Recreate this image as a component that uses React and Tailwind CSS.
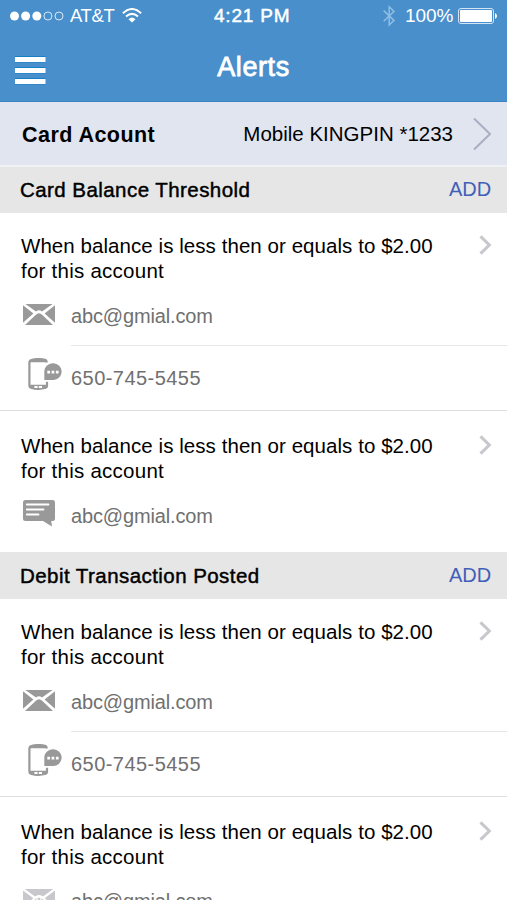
const MailIcon = ({ className }) => (
    <svg width="32" height="21" viewBox="0 0 32 21" className={className} fill="currentColor">
        <path d="M2.4 0H29.6L19 7.4Q16 4.9 13 7.4Z" />
        <path d="M0 1.2L10.4 9.4L0 18.8ZM32 1.2L21.6 9.4L32 18.8Z" />
        <path d="M2 21L12.6 11.1L14.4 9.7Q16 8.6 17.6 9.7L19.4 11.1L30 21Z" />
    </svg>
)

const OpenMailIcon = ({ className }) => (
    <svg width="32" height="21" viewBox="0 0 32 21" className={className}>
        <path d="M0 0H32V21H0Z" fill="currentColor" />
        <path d="M0 0L12 9M32 0L20 9M0 20.5L12 9Q16 5.4 20 9L32 20.5" fill="none" stroke="#fff" strokeWidth="2.2" />
        <circle cx="16" cy="10" r="2" fill="none" stroke="#fff" strokeWidth="1.2" />
    </svg>
)

const PhoneIcon = ({ className }) => (
    <svg width="34" height="32" viewBox="0 0 34 32" className={className} fill="none">
        <path d="M18.6 4.6V3.6Q18.6 2.3 17 1.8Q10.5 .3 4 1.8Q1.4 2.2 1.4 4.6V27.4Q1.4 29.4 3.6 30Q10 31.6 17 30Q19 29.4 19 27.4V23.8" stroke="currentColor" strokeWidth="2.2" />
        <path d="M2 2.6Q10.5-.8 18.8 2.6V4.2H2ZM1.2 26.8H19.4V29.2Q10.3 33.6 1.2 29.2Z" fill="currentColor" />
        <path d="M6.4 27.9H9.6V30H6.4ZM10.8 27.9H14V30H10.8Z" fill="#fff" />
        <path d="M25 5.2C29.8 5.2 33.6 8.9 33.6 13.6S29.8 22 25 22H16.3V13.6C16.3 8.9 20.2 5.2 25 5.2Z" fill="currentColor" />
        <g fill="#fff">
            <path d="M19.3 12.8H22V15.4H19.3ZM23.6 12.8H26.3V15.4H23.6ZM27.9 12.8H30.6V15.4H27.9Z" />
        </g>
    </svg>
)

const MessageIcon = ({ className }) => (
    <svg width="32" height="27" viewBox="0 0 32 27" className={className}>
        <path d="M2.5 0H29.5Q32 0 32 2.5V18.5Q32 21 29.5 21H28.2L29 26.5L20 21H2.5Q0 21 0 18.5V2.5Q0 0 2.5 0Z" fill="currentColor" />
        <path d="M3.8 4.5H25.5M3.8 9.5H20.5M3.8 14.5H15.5" stroke="#fff" strokeWidth="1.8" strokeLinecap="round" />
    </svg>
)

const StatusBar = () => (
    <div className="flex h-8 items-center text-white">
        <svg width="54" height="10" viewBox="0 0 54 10" className="ml-[10px]" fill="#fff">
            <circle cx="4.5" cy="5" r="4.5" />
            <circle cx="15.6" cy="5" r="4.5" />
            <circle cx="26.8" cy="5" r="4.5" />
            <circle cx="37.9" cy="5" r="4" fill="none" stroke="#fff" strokeWidth=".8" />
            <circle cx="49" cy="5" r="4" fill="none" stroke="#fff" strokeWidth=".8" />
        </svg>
        <span className="ml-[6px] w-[52px] whitespace-nowrap text-[18.5px] leading-8 tracking-[-0.4px]">AT&amp;T</span>
        <svg width="20" height="15" viewBox="0 0 20 15" className="mt-[-1px]" fill="none" stroke="#fff" strokeWidth="2">
            <path d="M.9 5.2Q10-3.2 19.1 5.2M4 8.6Q10 3.2 16 8.6" />
            <path d="M6.5 11.2Q10 8 13.5 11.2L10 14.6Z" fill="#fff" stroke="none" />
        </svg>
        <span className="ml-[72px] w-[169px] whitespace-nowrap text-[19px] leading-8 tracking-[0.8px] [-webkit-text-stroke:0.5px]">4:21 PM</span>
        <svg width="12" height="22" viewBox="0 0 12 22" fill="none" stroke="#8fbde3" strokeWidth="1.5">
            <path d="M.7 5.6L11 15.4L6.2 20V1.8L11 6.4L.7 16.2" />
        </svg>
        <span className="ml-[10px] w-[53px] whitespace-nowrap text-[19px] leading-8 tracking-[-0.1px]">100%</span>
        <svg width="40" height="16" viewBox="0 0 40 16">
            <rect x=".5" y=".5" width="35" height="15" rx="2.5" fill="none" stroke="#d3e4f4" />
            <rect x="2" y="2" width="32" height="12" rx="1" fill="#fff" />
            <path d="M37 5Q39 6 39 8T37 11Z" fill="#fff" />
        </svg>
    </div>
)

const Header = () => (
    <header className="h-[102px] border-b border-[#3a84c4] bg-[#488fcc]">
        <StatusBar />
        <div className="grid grid-cols-[1fr_auto_1fr] items-center">
            <svg width="31" height="29" viewBox="0 0 31 29" className="ml-[15px] mt-6">
                <path d="M0 .5H30.5M0 11.5H30.5M0 22.5H30.5M0 6H30.5M0 17H30.5M0 28H30.5" stroke="#1580c8" />
                <path d="M0 3.5H30.5M0 14.5H30.5M0 25.5H30.5" stroke="#fff" strokeWidth="5" />
            </svg>
            <h1 className="mt-4 text-[27px] leading-[34px] tracking-[0.6px] text-white [-webkit-text-stroke:0.8px]">Alerts</h1>
        </div>
    </header>
)

const SectionHeader = ({ title, className = 'h-[46px]' }) => (
    <div className={`flex items-center justify-between bg-[#e6e6e6] pl-5 pr-4 ${className}`}>
        <h2 className="text-[20.5px] tracking-[0.44px] [-webkit-text-stroke:0.45px]">{title}</h2>
        <button className="mt-[-3px] text-[20px] tracking-[-0.1px] text-[#3f60b8]">ADD</button>
    </div>
)

const Chevron = () => (
    <svg width="13" height="20" viewBox="0 0 13 20" className="mt-[2px]" fill="none" stroke="#c7c7cc" strokeWidth="3">
        <path d="M1.5 1.4L10.3 10L1.5 18.6" />
    </svg>
)

const AlertText = () => (
    <div className="flex items-start justify-between pl-[21px] pr-[15px]">
        <p className="whitespace-nowrap text-[20.5px] leading-[25px] tracking-[0.06px]">
            When balance is less then or equals to $2.00
            <br />
            <span className="tracking-[0.25px]">for this account</span>
        </p>
        <Chevron />
    </div>
)

const Contact = ({ icon, children, className = 'leading-[64px] tracking-[-0.15px]' }) => (
    <div className="flex">
        <div className="w-[71px] shrink-0 text-[#999]">{icon}</div>
        <div className={`flex-1 text-[20px] text-[#707070] ${className}`}>{children}</div>
    </div>
)

const EmailAndPhone = () => (
    <>
        <Contact icon={<MailIcon className="ml-[23px] mt-5" />} className="h-[62px] border-b border-[#e6e6e6] leading-[64px] tracking-[-0.15px]">abc@gmial.com</Contact>
        <Contact icon={<PhoneIcon className="ml-[28px] mt-3" />} className="h-[64px] leading-[64px] tracking-[0.45px]">650-745-5455</Contact>
    </>
)

const App = () => {
    return (
        <div className="h-[900px] w-[507px] overflow-hidden bg-white font-['Liberation_Sans',Arial,sans-serif] text-black">
            <Header />

            <div className="flex h-[65px] items-center border-b-2 border-[#f0f1f4] bg-[#e1e5f0] pl-[22px] pr-[15px]">
                <span className="mt-[3px] text-[21.5px] font-bold tracking-[0.45px]">Card Acount</span>
                <span className="ml-auto mt-[2px] text-[20.5px]">Mobile KINGPIN *1233</span>
                <svg width="19" height="34" viewBox="0 0 19 34" className="ml-5" fill="none" stroke="#a9aec2" strokeWidth="2">
                    <path d="M1 1.5L17 17L1 32.5" />
                </svg>
            </div>

            <SectionHeader title="Card Balance Threshold" />
            <div className="border-b border-[#dedede] pt-5">
                <AlertText />
                <div className="pt-px">
                    <EmailAndPhone />
                </div>
            </div>
            <div className="h-[141px] pt-[22px]">
                <AlertText />
                <Contact icon={<MessageIcon className="ml-[23px] mt-[17px]" />} className="leading-[66px] tracking-[-0.15px]">abc@gmial.com</Contact>
            </div>

            <SectionHeader title="Debit Transaction Posted" className="h-[47px] pt-px" />
            <div className="border-b border-[#dedede] pt-5">
                <AlertText />
                <div className="pt-px">
                    <EmailAndPhone />
                </div>
            </div>
            <div className="pt-[22px]">
                <AlertText />
                <Contact icon={<OpenMailIcon className="ml-[23px] mt-5 text-[#c7c7cc]" />}>abc@gmial.com</Contact>
            </div>
        </div>
    )
}

export default App
